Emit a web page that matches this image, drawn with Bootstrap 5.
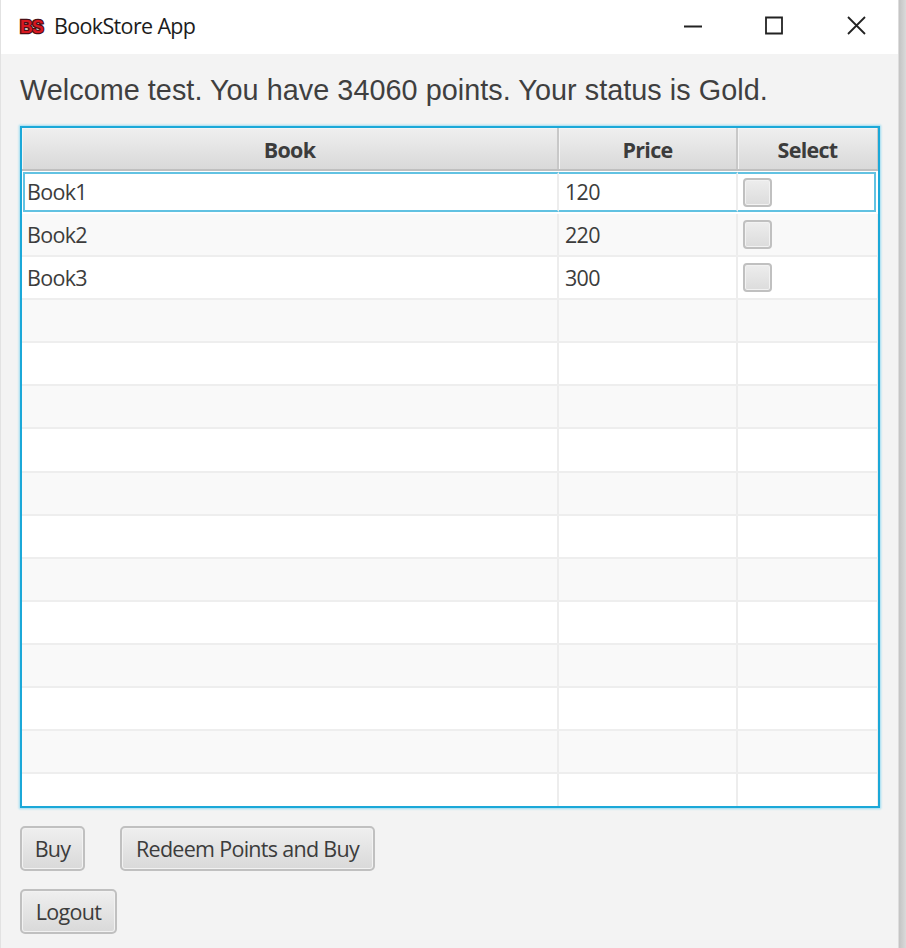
<!DOCTYPE html>
<html lang="en">
<head>
<meta charset="utf-8">
<meta name="viewport" content="width=device-width, initial-scale=1">
<title>BookStore App</title>
<link rel="stylesheet" href="https://cdn.jsdelivr.net/npm/bootstrap@5.3.0/dist/css/bootstrap.min.css">
<style>
html,body{height:100%}
body{background:#d2d2d2;overflow:hidden;font-family:"Open Sans","Noto Sans",sans-serif;font-size:21.5px;line-height:30px;letter-spacing:-.7px;color:#3c3c3c}
.shell{height:948px;background:linear-gradient(90deg,#c3c3c3 899px,#cacaca 901px,#dadada 906px)}
.app-window{width:899px;height:948px;background:#f3f3f3;border-left:1px solid #e2e2e2;border-right:1px solid #ddd}
.title-bar{height:54px;padding:0 31px 3px 17px;background:#fff;color:#1c1c1c}
.title-text{margin-left:8px;font-size:21.5px;letter-spacing:-.65px}
.welcome{height:71px;padding:20px 0 0 19px;font:28.8px/32px "Liberation Sans",Arial,sans-serif;letter-spacing:.04px;color:#3f3f3f}
.book-grid{width:860px;height:682px;margin:1px 0 0 19px;border:2px solid #1ba8d8;box-shadow:0 0 2px 1px #9bdcf2;background:#fff;overflow:hidden}
.grid-line{display:grid;grid-template-columns:537px 179px 1fr;height:43.1px;border-bottom:2px solid #eee}
.grid-line:nth-child(odd){background:#f9f9f9}
.grid-line>div{border-right:2px solid #ededed;padding:6px 0 0 5px;height:100%}
.grid-line>div:nth-child(2){padding-left:6px}
.grid-line>div:last-child{border-right:1px solid #eee}
.grid-line.head-line{height:43px;border-bottom:2px solid #bfbfbf;background:linear-gradient(#efefef,#d9d9d9);font-weight:700;text-align:center}
.grid-line.head-line>div{border-right-color:#c8c8c8;box-shadow:inset 1px 1px #f4f4f4;padding:7px 0 0}
.grid-line.focus-line{border-bottom:0;padding-top:1px;height:43px}
.grid-line.focus-line>div{height:40px;border-top:2px solid #62c2e2;border-bottom:2px solid #62c2e2;padding-top:3px}
.grid-line.focus-line>div:first-child{border-left:2px solid #62c2e2;margin-left:1px;padding-left:2px}
.grid-line.focus-line>div:last-child{border-right:2px solid #62c2e2;margin-right:2px}
.tick{display:block;width:29px;height:29px;border:2px solid #c0c0c0;border-radius:4px;background:linear-gradient(#ededed,#dcdcdc);box-shadow:inset 0 0 0 1px #f2f2f2}
.focus-line .tick{margin-top:1px}
.actions{padding:18px 0 0 19px}
.btn.fx-btn{height:45px;padding:0;border:2px solid #c0c0c0;border-radius:5px;background:linear-gradient(#efefef,#d9d9d9);box-shadow:inset 0 0 0 1px #f2f2f2;color:#3c3c3c;font-size:21.5px;line-height:38px;letter-spacing:inherit}
.w-buy{width:65px}.w-redeem{width:255px;margin-left:35px}.w-logout{width:97px;margin-top:18px}
</style>
</head>
<body>
<div class="shell"><main class="app-window">
<header class="title-bar d-flex align-items-center">
<svg width="28" height="24" viewBox="0 0 28 24"><text x="2" y="19" font-family="Liberation Sans,sans-serif" font-size="18" font-weight="700" textLength="23" lengthAdjust="spacingAndGlyphs" fill="#d81820" stroke="#4a1015" stroke-width="2.6" paint-order="stroke">BS</text></svg>
<span class="title-text">BookStore App</span>
<svg class="ms-auto" width="184" height="24" viewBox="0 0 184 24" fill="none" stroke="#222" stroke-width="1.8"><path d="M1 12.5H19M83 3.5H99V19.500H83ZM165 3L182 20M182 3L165 20"/></svg>
</header>
<div class="welcome"><span>Welcome test. You have 34060 points. Your status is Gold.</span></div>
<section class="book-grid">
<div class="grid-line head-line"><div>Book</div><div>Price</div><div>Select</div></div>
<div class="grid-line focus-line"><div>Book1</div><div>120</div><div><span class="tick"></span></div></div>
<div class="grid-line"><div>Book2</div><div>220</div><div><span class="tick"></span></div></div>
<div class="grid-line"><div>Book3</div><div>300</div><div><span class="tick"></span></div></div>
<div class="grid-line"><div></div><div></div><div></div></div>
<div class="grid-line"><div></div><div></div><div></div></div>
<div class="grid-line"><div></div><div></div><div></div></div>
<div class="grid-line"><div></div><div></div><div></div></div>
<div class="grid-line"><div></div><div></div><div></div></div>
<div class="grid-line"><div></div><div></div><div></div></div>
<div class="grid-line"><div></div><div></div><div></div></div>
<div class="grid-line"><div></div><div></div><div></div></div>
<div class="grid-line"><div></div><div></div><div></div></div>
<div class="grid-line"><div></div><div></div><div></div></div>
<div class="grid-line"><div></div><div></div><div></div></div>
<div class="grid-line"><div></div><div></div><div></div></div>
</section>
<div class="actions d-flex flex-column">
<div class="d-flex"><button class="btn fx-btn w-buy">Buy</button><button class="btn fx-btn w-redeem">Redeem Points and Buy</button></div>
<button class="btn fx-btn w-logout">Logout</button>
</div>
</main></div>
<script src="https://cdn.jsdelivr.net/npm/bootstrap@5.3.0/dist/js/bootstrap.bundle.min.js"></script>
</body>
</html>
